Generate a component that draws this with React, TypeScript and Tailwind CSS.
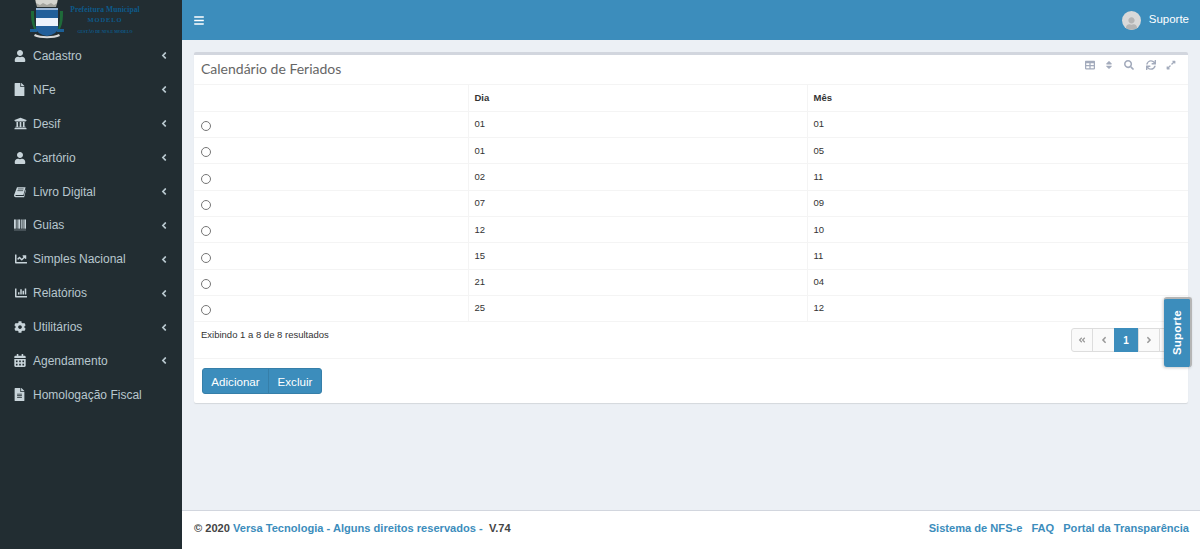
import React from "react";
import {
  FaUser, FaFile, FaUniversity, FaChartLine, FaChartBar, FaCog,
  FaCalendarAlt, FaFileAlt, FaAngleLeft, FaAngleRight, FaAngleDoubleLeft, FaBars,
  FaTable, FaSort, FaSearch, FaSync, FaExpandAlt,
} from "react-icons/fa";

type IconProps = { className?: string };

function BookIcon({ className }: IconProps) {
  return (
    <svg viewBox="0 0 14 12" className={className} fill="currentColor">
      <path d="M3.5 0.5H13.5L11 9.5H2.2C1.5 9.5 1.3 10.6 2.2 10.6H11.4L13.6 3.2L14 3.6L11.8 12H2C0.5 12 -0.3 10.6 0.2 9.2Z" />
      <path d="M4.6 2.4H11.2M4 4.4H10.6" stroke="#222d32" strokeWidth="0.8" fill="none" />
    </svg>
  );
}

function BarcodeIcon({ className }: IconProps) {
  return (
    <svg viewBox="0 0 13 12" className={className} fill="currentColor">
      <rect x="0" y="0" width="2" height="10" />
      <rect x="2.8" y="0" width="1" height="10" />
      <rect x="4.6" y="0" width="2" height="10" />
      <rect x="7.4" y="0" width="1" height="10" />
      <rect x="9.2" y="0" width="1.2" height="10" />
      <rect x="11.2" y="0" width="1.8" height="10" />
      <rect x="0" y="11" width="13" height="0.8" opacity="0.6" />
    </svg>
  );
}

const menu: { label: string; Icon: React.ComponentType<IconProps>; arrow: boolean; size: string }[] = [
  { label: "Cadastro", Icon: FaUser, arrow: true, size: "h-[12px] w-[12px]" },
  { label: "NFe", Icon: FaFile, arrow: true, size: "h-[13px] w-[11px]" },
  { label: "Desif", Icon: FaUniversity, arrow: true, size: "h-[13px] w-[13px]" },
  { label: "Cartório", Icon: FaUser, arrow: true, size: "h-[12px] w-[12px]" },
  { label: "Livro Digital", Icon: BookIcon, arrow: true, size: "h-[12px] w-[12px]" },
  { label: "Guias", Icon: BarcodeIcon, arrow: true, size: "h-[12px] w-[12px]" },
  { label: "Simples Nacional", Icon: FaChartLine, arrow: true, size: "h-[12px] w-[14px]" },
  { label: "Relatórios", Icon: FaChartBar, arrow: true, size: "h-[12px] w-[14px]" },
  { label: "Utilitários", Icon: FaCog, arrow: true, size: "h-[12px] w-[12px]" },
  { label: "Agendamento", Icon: FaCalendarAlt, arrow: true, size: "h-[13px] w-[12px]" },
  { label: "Homologação Fiscal", Icon: FaFileAlt, arrow: false, size: "h-[13px] w-[11px]" },
];

const rows = [
  ["01", "01"], ["01", "05"], ["02", "11"], ["07", "09"],
  ["12", "10"], ["15", "11"], ["21", "04"], ["25", "12"],
];

function Crest() {
  return (
    <svg width="34" height="39" viewBox="0 0 34 39" className="shrink-0">
      <path d="M5 0h23l-2 7H7z" fill="#a5a59e" />
      <path d="M6 0h21v3l-3 2-3-2-4 2-4-2-3 2-4-2z" fill="#d4d4ce" />
      <path d="M1 11c0 6 0 12 3 18h2c-2-6-2-12-2-18zM33 11c0 6 0 12-3 18h-2c2-6 2-12 2-18z" fill="#1f6b3a" />
      <path d="M6 8h22v20c0 4-5 7-11 8-6-1-11-4-11-8z" fill="#235f9a" />
      <path d="M6 8h22v2H6z" fill="#9cb8d8" />
      <rect x="6" y="18" width="22" height="8" fill="#eef2fb" />
      <rect x="0" y="29" width="7" height="3" fill="#1c5f96" />
      <rect x="27" y="29" width="7" height="3" fill="#1c5f96" />
      <path d="M5 34c6 3 18 3 24 0l1 2c-6 3-20 3-26 0z" fill="#d8d8d8" />
    </svg>
  );
}

export default function App() {
  return (
    <div className="relative flex h-[549px] w-[1200px] overflow-hidden bg-[#ecf0f5] font-['Liberation_Sans',sans-serif] text-[#333]">
      <aside className="flex w-[182px] shrink-0 flex-col bg-[#222d32]">
        <div className="flex h-[39px] items-start overflow-hidden pl-[30px]">
          <Crest />
          <div className="ml-[6px] flex w-[70px] flex-col items-center pt-[5px] font-['Liberation_Serif',serif] font-bold text-[#0d5a8a]">
            <span className="whitespace-nowrap text-[7.5px] leading-[10px] tracking-[0.1px]">Prefeitura Municipal</span>
            <span className="text-[6.5px] leading-[9px] tracking-[0.9px]">MODELO</span>
            <span className="whitespace-nowrap pt-[5px] text-[4px] leading-[5px]">GESTÃO DE NFS-E MODELO</span>
          </div>
        </div>
        <nav className="flex flex-col">
          {menu.map(({ label, Icon, arrow, size }) => (
            <div key={label} className="flex h-[33.9px] items-center text-[12px] text-[#b8c7ce]">
              <span className="flex w-[33px] justify-start pl-[14px] text-[#c8d4da]">
                <Icon className={size} />
              </span>
              <span className="flex-1 whitespace-nowrap">{label}</span>
              {arrow && <FaAngleLeft className="mr-[14px] h-[11px] w-[8px]" />}
            </div>
          ))}
        </nav>
      </aside>

      <div className="flex min-w-0 flex-1 flex-col">
        <header className="flex h-[40px] shrink-0 items-center justify-between bg-[#3c8dbc] pl-[12px] pr-[11px] text-white">
          <FaBars className="h-[11px] w-[10px]" />
          <div className="flex items-center gap-[8px] text-[11.5px]">
            <span className="flex h-[19px] w-[19px] items-end justify-center overflow-hidden rounded-full bg-[#d9d9d9]">
              <FaUser className="h-[13px] w-[11px] text-[#b5b5b5]" />
            </span>
            <span>Suporte</span>
          </div>
        </header>

        <main className="flex-1 px-[12px] pt-[12px]">
          <section className="h-[351px] rounded-[2px] border-t-[3px] border-[#d2d6de] bg-white shadow-[0_1px_1px_rgba(0,0,0,0.1)]">
            <div className="flex h-[30px] items-center justify-between border-b border-[#f4f4f4] pl-[7px] pr-[12px]">
              <h3 className="pb-[2px] font-['Lato',sans-serif] text-[14px] text-[#666]">Calendário de Feriados</h3>
              <div className="mb-[9px] flex items-center text-[#a3abbc]">
                <FaTable className="h-[10px] w-[10px]" />
                <FaSort className="ml-[9px] h-[10px] w-[10px]" />
                <FaSearch className="ml-[10px] h-[10px] w-[10px]" />
                <FaSync className="ml-[12px] h-[10px] w-[10px]" />
                <FaExpandAlt className="ml-[10px] h-[10px] w-[10px]" />
              </div>
            </div>
            <table className="w-full table-fixed border-collapse text-[9.5px] text-[#333]">
              <colgroup>
                <col className="w-[274px]" />
                <col className="w-[339px]" />
                <col />
              </colgroup>
              <thead>
                <tr className="h-[26.4px] border-b border-[#f4f4f4] font-bold">
                  <th className="border-r border-[#f4f4f4]" />
                  <th className="border-r border-[#f4f4f4] pl-[6px] text-left">Dia</th>
                  <th className="pl-[6px] text-left">Mês</th>
                </tr>
              </thead>
              <tbody>
                {rows.map(([d, m], i) => (
                  <tr key={i} className="h-[26.3px] border-b border-[#f4f4f4]">
                    <td className="border-r border-[#f4f4f4] pl-[7px] pt-[3px] align-middle">
                      <input type="radio" name="feriado" className="block h-[10px] w-[10px] appearance-none rounded-full border border-[#767676] bg-white" />
                    </td>
                    <td className="border-r border-[#f4f4f4] pl-[6px] align-middle">{d}</td>
                    <td className="pl-[6px] align-middle">{m}</td>
                  </tr>
                ))}
              </tbody>
            </table>
            <div className="flex h-[37px] items-start justify-between border-b border-[#f4f4f4] pl-[7px] pr-[7px] pt-[6px]">
              <span className="pt-[1px] text-[9.5px] leading-[12px]">Exibindo 1 a 8 de 8 resultados</span>
              <div className="flex h-[24px] text-[10px] text-[#999]">
                <span className="flex w-[22px] items-center justify-center rounded-l-[3px] border border-[#ddd] bg-[#fafafa]"><FaAngleDoubleLeft className="h-[8px] w-[8px]" /></span>
                <span className="-ml-px flex w-[23px] items-center justify-center border border-[#ddd] bg-[#fafafa]"><FaAngleLeft className="h-[10px] w-[8px]" /></span>
                <span className="-ml-px flex w-[24px] items-center justify-center bg-[#3c8dbc] font-bold text-white">1</span>
                <span className="flex w-[22px] items-center justify-center border border-[#ddd] bg-[#fafafa]"><FaAngleRight className="h-[10px] w-[8px]" /></span>
                <span className="-ml-px w-[22px] rounded-r-[3px] border border-[#ddd] bg-[#fafafa]" />
              </div>
            </div>
            <div className="pl-[8px] pt-[9px]">
              <div className="inline-flex h-[26px] overflow-hidden rounded-[3px] border border-[#367fa9] bg-[#3c8dbc] text-[11.6px] text-white">
                <span className="flex w-[66px] items-center justify-center border-r border-[#367fa9]">Adicionar</span>
                <span className="flex w-[52px] items-center justify-center">Excluir</span>
              </div>
            </div>
          </section>
        </main>

        <footer className="flex h-[39px] shrink-0 items-center justify-between border-t border-[#d2d6de] bg-white pb-[3px] pl-[12px] pr-[11px] text-[11.1px] font-bold text-[#444]">
          <div className="whitespace-pre">
            © 2020 <span className="text-[#3c8dbc]">Versa Tecnologia - Alguns direitos reservados - </span> V.74
          </div>
          <div className="flex gap-[9px] text-[#3c8dbc]">
            <span>Sistema de NFS-e</span>
            <span>FAQ</span>
            <span>Portal da Transparência</span>
          </div>
        </footer>
      </div>

      <div className="absolute left-[1164px] top-[297px] flex h-[70px] w-[28px] items-center justify-center rounded-[3px] border-r-2 border-t-2 border-[#b5b5b5] bg-[#3c8dbc] shadow-[-1px_1px_3px_rgba(0,0,0,0.2)]">
        <span className="-rotate-90 text-[11.5px] font-bold tracking-[0.2px] text-white">Suporte</span>
      </div>
    </div>
  );
}
